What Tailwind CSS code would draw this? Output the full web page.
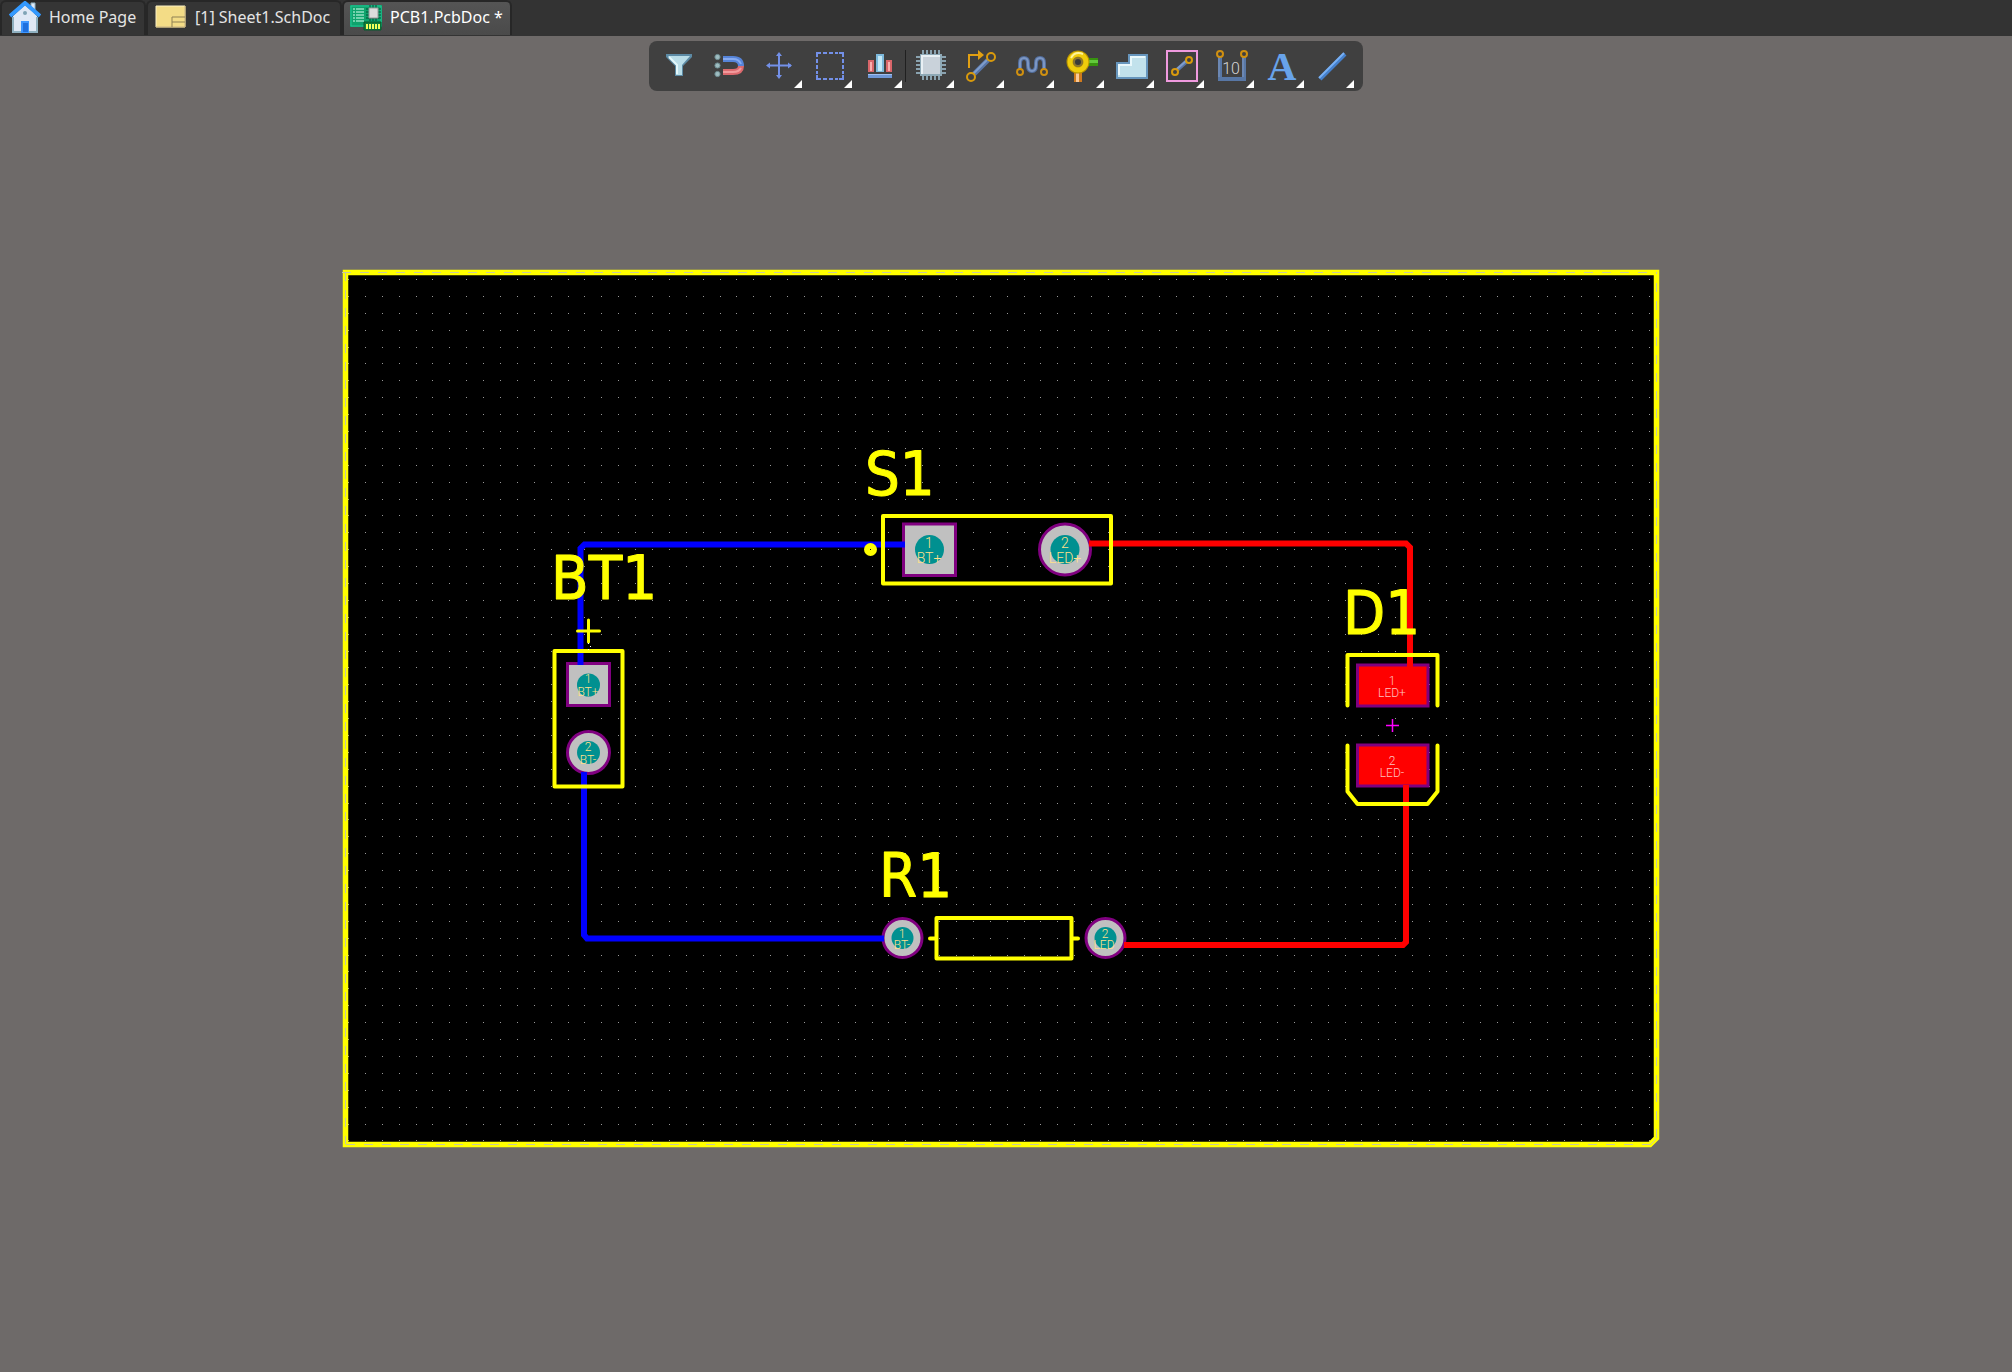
<!DOCTYPE html>
<html lang="en">
<head>
    <meta charset="UTF-8">
    <meta name="viewport" content="width=device-width, initial-scale=1.0">
    <title>PCB1.PcbDoc</title>
    <script src="https://cdn.jsdelivr.net/npm/@tailwindcss/browser@4"></script>
</head>
<body class="bg-[#6e6a69] min-h-screen flex flex-col font-['Noto_Sans','Open_Sans',sans-serif]">
    <!-- Document tabs -->
    <header class="bg-[#333333] h-9 flex items-start text-base leading-6 text-[#e4e4e4] overflow-hidden">
        <button class="h-[35px] w-[146px] pl-[7px] pb-[3px] flex items-center gap-2 whitespace-nowrap rounded-t-md border-2 border-b-0 border-[#272727] bg-[#353535]">
            <svg class="w-8 h-8 shrink-0" viewBox="0 0 32 32">
                <path d="M22 2h4v10h-4z" fill="#dfe8f5" stroke="#8fb0c0"/>
                <path d="M4 15 16 4l12 11v17H4z" fill="#dfe8f5"/>
                <path d="M4 16v15h24V16" fill="none" stroke="#8fb0c0" stroke-width="2"/>
                <path d="M1 15 16 2l15 13" fill="none" stroke="#3399ff" stroke-width="4"/>
                <circle cx="16" cy="12" r="2" fill="#7fa3b5"/>
                <path d="M12 20h8v12h-8z" fill="#3d96ff"/>
                <path d="M14 22h5v9h-5z" fill="#1f6fdd"/>
            </svg>
            Home Page
        </button>
        <button class="h-[35px] w-[196px] pl-[7px] pb-[3px] flex items-center gap-2 whitespace-nowrap rounded-t-md border-2 border-b-0 border-[#272727] bg-[#353535]">
            <svg class="w-8 h-8 shrink-0" viewBox="0 0 32 32">
                <path d="M1 5h29v21H1z" fill="#f3dc86" stroke="#fbf0c4"/>
                <path d="M1 26h29V5" fill="none" stroke="#c2a968"/>
                <path d="M17 26V16h13M17 21h13" fill="none" stroke="#8f8154"/>
            </svg>
            [1] Sheet1.SchDoc
        </button>
        <button class="h-[35px] w-[170px] pl-[6px] pb-[3px] flex items-center gap-2 whitespace-nowrap rounded-t-md border-2 border-b-0 border-[#272727] bg-linear-to-b from-[#555555] to-[#4a4a4a] text-white">
            <svg class="w-8 h-8 shrink-0" viewBox="0 0 32 32">
                <path d="M0 4h32v22H0z" fill="#0fa36c"/>
                <path d="M1 5h30v20H1z" fill="none" stroke="#25c596"/>
                <path d="M3 8h2M3 11h2M3 14h2M3 17h2M3 20h2" stroke="#d8ffee"/>
                <path d="M6 8h8M6 11h8M6 14h8M6 17h8M6 20h8" stroke="#d8ffee"/>
                <path d="M16 8h15M16 11h15M16 14h15M16 17h15M20 4v16M23 4v16M26 4v16" stroke="#054a35"/>
                <path d="M19 7h9v10h-9z" fill="#dcdcdc" stroke="#9a9a9a"/>
                <path d="M14 21h17v8H14z" fill="#11823a" stroke="#06592f"/>
                <path d="M16 23h2v5h-2zM19 23h2v5h-2zM22 23h2v5h-2zM25 23h2v5h-2zM28 23h2v5h-2z" fill="#f4ff5c"/>
            </svg>
            PCB1.PcbDoc *
        </button>
    </header>

    <!-- Workspace -->
    <main class="relative grow">
        <!-- Floating tool bar -->
        <div class="absolute top-[5px] inset-x-0 flex justify-center">
            <div class="bg-[#404040] rounded-lg px-[6px] h-[50px] flex items-center">
                <button class="w-[50px] h-[50px]" aria-label="Filter">
                    <svg viewBox="0 0 50 50">
                        <path d="M11 13h26v3l-9 9v10h-8V25l-9-9z" fill="#5c8aa4"/>
                        <path d="M13 15h22l-8 9v10h-6V24z" fill="#b9dde8"/>
                        <path d="M14 16l8 8v9" fill="none" stroke="#e3f7fb" stroke-width="2"/>
                    </svg>
                </button>
                <button class="w-[50px] h-[50px]" aria-label="Snap">
                    <svg viewBox="0 0 50 50">
                        <g fill="#9dbcc0" stroke="#6e8d92"><circle cx="12.5" cy="16" r="2.6"/><circle cx="12.5" cy="24.5" r="2.6"/><circle cx="12.5" cy="33" r="2.6"/></g>
                        <path d="M18 18h10q8 0 8 7" fill="none" stroke="#5684d8" stroke-width="6"/>
                        <path d="M36 25q0 6-8 6H18" fill="none" stroke="#dc6a6e" stroke-width="6"/>
                        <path d="M18 18h10q6 0 8 5" fill="none" stroke="#86aaf0" stroke-width="2"/>
                        <path d="M36 27q-2 4-8 4H18" fill="none" stroke="#f19a9c" stroke-width="2"/>
                    </svg>
                </button>
                <button class="w-[50px] h-[50px]" aria-label="Move">
                    <svg viewBox="0 0 50 50">
                        <path d="M24 13v23M13 24.500h23" stroke="#7390e8" stroke-width="2"/>
                        <path d="M24 11l3 4h-6zM24 38l3-4h-6zM11 24.500l4-3v6zM37 24.500l-4-3v6z" fill="#7390e8"/>
                        <path d="M47 39v8h-8z" fill="#fff"/>
                    </svg>
                </button>
                <button class="w-[50px] h-[50px]" aria-label="Select area">
                    <svg viewBox="0 0 50 50">
                        <path d="M12 16v-4h4M34 12h4v4M38 34v4h-4M16 38h-4v-4" fill="none" stroke="#7390e8" stroke-width="2"/>
                        <path d="M18 12h15M18 38h15M12 18v15M38 18v15" stroke="#7390e8" stroke-width="2" stroke-dasharray="4 2"/>
                        <path d="M47 39v8h-8z" fill="#fff"/>
                    </svg>
                </button>
                <button class="w-[50px] h-[50px]" aria-label="Align">
                    <svg viewBox="0 0 50 50">
                        <path d="M13 19h6v12h-6zM31 19h6v12h-6z" fill="#d9666a"/>
                        <path d="M15 21h2v9h-2zM33 21h2v9h-2z" fill="#f9adad"/>
                        <path d="M21 13h8v18h-8z" fill="#7db9dc"/>
                        <path d="M23 15h4v15h-4z" fill="#c3e8f7"/>
                        <path d="M13 33h24v4H13z" fill="#6f97d6"/>
                        <path d="M13 33h24v1H13z" fill="#9fbef0"/>
                        <path d="M47 39v8h-8z" fill="#fff"/>
                    </svg>
                </button>
                <div class="w-[2px] h-8 border-l border-[#202020]"></div>
                <button class="w-[50px] h-[50px]" aria-label="Place component">
                    <svg viewBox="0 0 50 50">
                        <path d="M16 9v30M20 9v30M24 9v30M28 9v30M32 9v30M9 16h30M9 20h30M9 24h30M9 28h30M9 32h30" stroke="#8aa3b0" stroke-width="2"/>
                        <path d="M13 13h22v22H13z" fill="#8ea9b6"/>
                        <path d="M15 15h18v18H15z" fill="#c9d2da"/>
                        <path d="M15 33V15h18" fill="none" stroke="#e8f0f4" stroke-width="2"/>
                        <path d="M47 39v8h-8z" fill="#fff"/>
                    </svg>
                </button>
                <button class="w-[50px] h-[50px]" aria-label="Route">
                    <svg viewBox="0 0 50 50">
                        <path d="M17 33 31 19" stroke="#5876a8" stroke-width="5"/>
                        <path d="M16 33 30 19" stroke="#7f9dcc" stroke-width="2"/>
                        <path d="M12 27V14h10" fill="none" stroke="#e2a012" stroke-width="2"/>
                        <path d="M21 9l6 5-6 5z" fill="#e2a012"/>
                        <g fill="#404040" stroke="#d99a0c" stroke-width="2"><circle cx="34" cy="16" r="4"/><circle cx="14" cy="36" r="4"/></g>
                        <path d="M47 39v8h-8z" fill="#fff"/>
                    </svg>
                </button>
                <button class="w-[50px] h-[50px]" aria-label="Length tuning">
                    <svg viewBox="0 0 50 50">
                        <path d="M13 28v-6q0-5 4-5t4 5v2q0 6 4 6t4-6v-2q0-5 4-5t4 5v6" fill="none" stroke="#536f9e" stroke-width="4"/>
                        <path d="M13 28v-6q0-5 4-5t4 5v2q0 6 4 6t4-6v-2q0-5 4-5t4 5v6" fill="none" stroke="#7c97c4" stroke-width="2"/>
                        <g fill="#404040" stroke="#d09010" stroke-width="2"><circle cx="13" cy="31" r="3"/><circle cx="37" cy="31" r="3"/></g>
                        <path d="M47 39v8h-8z" fill="#fff"/>
                    </svg>
                </button>
                <button class="w-[50px] h-[50px]" aria-label="Place via">
                    <svg viewBox="0 0 50 50">
                        <path d="M30 17h11v8H30z" fill="#37920f"/>
                        <path d="M30 19h11v3H30z" fill="#62c93c"/>
                        <path d="M17 31h8v10h-8z" fill="#cf7a1e"/>
                        <path d="M19 31h3v10h-3z" fill="#f9c896"/>
                        <circle cx="21" cy="21" r="8" fill="none" stroke="#b89400" stroke-width="7"/>
                        <circle cx="21" cy="21" r="8" fill="none" stroke="#f0cc0c" stroke-width="5"/>
                        <path d="M14 17q4-7 12-4" fill="none" stroke="#fff49a" stroke-width="2"/>
                        <circle cx="21" cy="21" r="4" fill="#3a3a3a" stroke="#8c7630" stroke-width="2"/>
                        <path d="M47 39v8h-8z" fill="#fff"/>
                    </svg>
                </button>
                <button class="w-[50px] h-[50px]" aria-label="Place polygon">
                    <svg viewBox="0 0 50 50">
                        <path d="M10 22h12v-8h18v23H10z" fill="#c2e2ec" stroke="#6796bd" stroke-width="2"/>
                        <path d="M12 34V24h12v-8h14" fill="none" stroke="#e9f8fc" stroke-width="2"/>
                        <path d="M47 39v8h-8z" fill="#fff"/>
                    </svg>
                </button>
                <button class="w-[50px] h-[50px]" aria-label="Keepout">
                    <svg viewBox="0 0 50 50">
                        <path d="M10 10h30v30H10z" fill="none" stroke="#f09adf" stroke-width="2"/>
                        <path d="M20 29 30 20" stroke="#5876a8" stroke-width="4"/>
                        <path d="M20 28 29 20" stroke="#7f9dcc" stroke-width="2"/>
                        <g fill="#404040" stroke="#d99a0c" stroke-width="2"><circle cx="32" cy="19" r="3"/><circle cx="18" cy="31" r="3"/></g>
                        <path d="M47 39v8h-8z" fill="#fff"/>
                    </svg>
                </button>
                <button class="w-[50px] h-[50px]" aria-label="Dimension">
                    <svg viewBox="0 0 50 50">
                        <path d="M13 16v22h24V16" fill="none" stroke="#5877a5" stroke-width="4"/>
                        <path d="M12 16v20M36 16v20" stroke="#8099c0"/>
                        <g fill="#404040" stroke="#d09010" stroke-width="2"><circle cx="13" cy="13" r="3"/><circle cx="37" cy="13" r="3"/></g>
                        <text x="24" y="33" text-anchor="middle" class="text-base font-light font-[Roboto]" fill="#d5d5d5">10</text>
                        <path d="M47 39v8h-8z" fill="#fff"/>
                    </svg>
                </button>
                <button class="w-[50px] h-[50px]" aria-label="Place text">
                    <svg viewBox="0 0 50 50">
                        <text x="25" y="39" text-anchor="middle" class="text-[40px] font-bold font-['Liberation_Serif']" fill="#68a3ea">A</text>
                        <path d="M47 39v8h-8z" fill="#fff"/>
                    </svg>
                </button>
                <button class="w-[50px] h-[50px]" aria-label="Place line">
                    <svg viewBox="0 0 50 50">
                        <path d="M13 38 38 13" stroke="#4580cc" stroke-width="4"/>
                        <path d="M12 37 37 12" stroke="#78b0f4" stroke-width="2"/>
                        <path d="M47 39v8h-8z" fill="#fff"/>
                    </svg>
                </button>
            </div>
        </div>

        <!-- Board -->
        <svg class="block w-full" viewBox="0 36 2012 1336">
            <path d="M345 272H1656V1138L1650 1144H345z" fill="#000"/>
            <path id="grid" fill="#999" shape-rendering="crispEdges"/>
            <path d="M345.500 272.500H1656.500V1138L1650 1144.500H345.500z" fill="none" stroke="#ff0" stroke-width="5.500"/>
            <path d="M342 272.500H1656M1656.500 1138V272M345.500 272V1144M1651 1144 1656 1139M1651 1144.500H345" fill="none" stroke="#c9c99a" stroke-dasharray="9 9"/>

            <!-- Pad rings -->
            <g fill="#c0c0c0" stroke="#800080" stroke-width="3">
                <path d="M567.500 663.500h42v42h-42z"/>
                <circle cx="588.500" cy="752.500" r="21"/>
                <path d="M903.500 524h52v51.500h-52z"/>
                <circle cx="1065" cy="549.500" r="25.500"/>
                <circle cx="902.500" cy="938" r="19.500"/>
                <circle cx="1105.500" cy="938" r="19.500"/>
            </g>
            <g fill="#f00" stroke="#800080" stroke-width="3">
                <path d="M1357.500 665h70.500v41h-70.500z"/>
                <path d="M1357.500 745h70.500v41h-70.500z"/>
            </g>

            <!-- Tracks -->
            <g fill="none" stroke="#00f" stroke-width="6">
                <path d="M905 544.500H584.500L580.500 548.500V665"/>
                <path d="M584 772V935L587 938.500H884"/>
            </g>
            <g fill="none" stroke="#f00" stroke-width="6">
                <path d="M1089 543.500H1406L1410 547.500V667"/>
                <path d="M1406 785V942L1403 945H1124"/>
            </g>

            <!-- Holes -->
            <g fill="#009090">
                <circle cx="588.500" cy="685" r="11.500"/>
                <circle cx="588.500" cy="752.500" r="11.500"/>
                <circle cx="929.500" cy="549.500" r="14.500"/>
                <circle cx="1065" cy="549.500" r="14.500"/>
                <circle cx="902.500" cy="938" r="11"/>
                <circle cx="1105.500" cy="938" r="11"/>
            </g>

            <!-- Overlay -->
            <g fill="none" stroke="#ff0" stroke-width="4" stroke-linecap="round" stroke-linejoin="round">
                <path d="M554.500 651h68v135.500h-68z"/>
                <path d="M883 516h228v67.500H883z"/>
                <path d="M936.500 918h135v40.500h-135zM930 938.500h6M1072 938.500h6"/>
                <path d="M1347.500 705.500V655h90v50.500M1347.500 745.500v46l10 12.500h70l10-12.500v-46"/>
                <path d="M588.500 620v22M577.500 631h22" stroke-width="3"/>
            </g>
            <circle cx="870.500" cy="549.500" r="6.500" fill="#ff0"/>
            <path d="M870 549h1v1h-1z" fill="#000"/>
            <path d="M1392.500 719v13M1386 725.500h13" stroke="#f0f" stroke-width="1.500"/>
            <path d="M588 643h1v1h-1zM590 646h1v1h-1zM588 649h1v1h-1z" fill="#fff"/>

            <!-- Designators -->
            <g class="text-[61px] font-['DejaVu_Sans_Condensed','DejaVu_Sans']" fill="#ff0" stroke="#ff0" stroke-linejoin="round">
                <text x="551" y="599">BT1</text>
                <text x="865" y="495">S1</text>
                <text x="1343" y="634">D1</text>
                <text x="879" y="897">R1</text>
            </g>

            <!-- Pad labels -->
            <g class="font-light font-[Roboto]" fill="#ffe08c" text-anchor="middle">
                <g class="text-xs">
                    <text x="588" y="683">1</text>
                    <text x="588" y="696">BT+</text>
                    <text x="588" y="751">2</text>
                    <text x="588" y="764">BT-</text>
                    <text x="902" y="938">1</text>
                    <text x="902" y="949">BT-</text>
                    <text x="1105" y="938">2</text>
                    <text x="1104" y="949">LED</text>
                </g>
                <g class="text-sm">
                    <text x="929" y="548">1</text>
                    <text x="929" y="563">BT+</text>
                    <text x="1065" y="548">2</text>
                    <text x="1065" y="563">LED+</text>
                </g>
            </g>
            <g class="text-xs font-light font-[Roboto]" fill="#ffc0c0" text-anchor="middle">
                <text x="1392" y="685">1</text>
                <text x="1392" y="697">LED+</text>
                <text x="1392" y="765">2</text>
                <text x="1392" y="777">LED-</text>
            </g>
        </svg>
    </main>

    <script>
        // Snap grid dots
        const pitch = 16.89;
        let d = '';
        for (let row = 0; row < 52; row++) {
            for (let col = 0; col < 78; col++) {
                const x = Math.round(348 + col * pitch);
                const y = Math.round(279 + row * pitch);
                if (x < 1654 && y < 1142) d += `M${x} ${y}h1v1h-1z`;
            }
        }
        document.getElementById('grid').setAttribute('d', d);
    </script>
</body>
</html>
